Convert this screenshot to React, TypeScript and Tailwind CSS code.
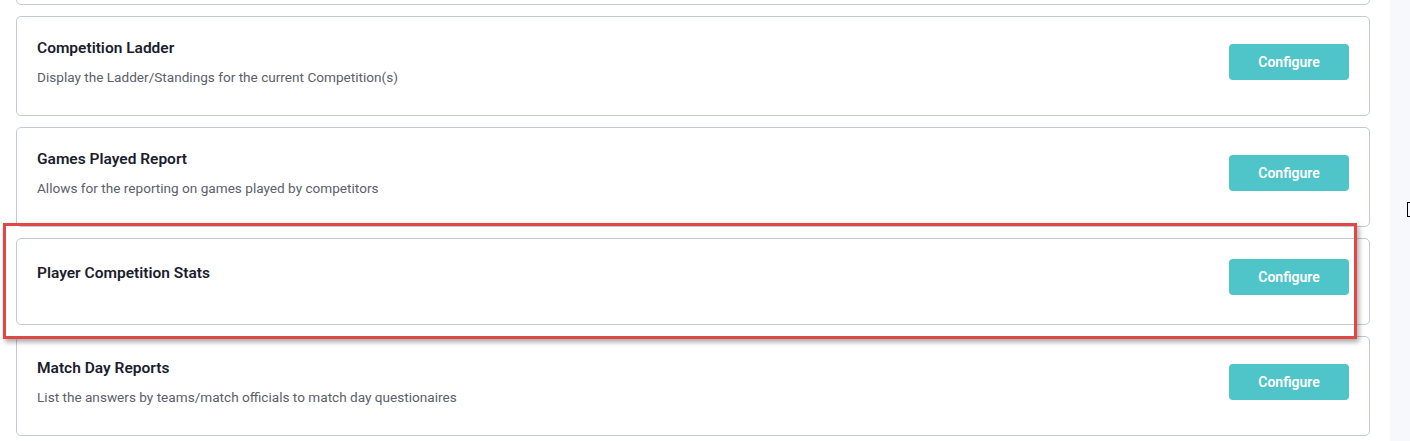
import React from "react";

type Item = { title: string; desc?: string; highlight?: boolean };

const items: Item[] = [
  { title: "Competition Results", desc: "Display results for the current Competition(s)" },
  { title: "Competition Ladder", desc: "Display the Ladder/Standings for the current Competition(s)" },
  { title: "Games Played Report", desc: "Allows for the reporting on games played by competitors" },
  { title: "Player Competition Stats", highlight: true },
  { title: "Match Day Reports", desc: "List the answers by teams/match officials to match day questionaires" },
];

function Card({ item }: { item: Item }) {
  return (
    <div className="relative">
      <div
        className={
          item.highlight
            ? "flex items-center justify-between rounded-[5px] border border-[#c3cad3] bg-white pl-5 pr-5 pt-5 pb-[29px]"
            : "flex items-center justify-between rounded-[5px] border border-[#c3cad3] bg-white pl-5 pr-5 pt-5 pb-[28px]"
        }
      >
        <div className="flex flex-col">
          <div className="text-[15.5px] leading-[22px] font-semibold text-[#1b1d2e]">{item.title}</div>
          <div className="mt-2 text-[13.6px] leading-[20px] text-[#5b606b]">{item.desc ?? ""}</div>
        </div>
        <button className="h-9 w-[120px] rounded-[4px] bg-[#4fc4c9] text-[14px] font-semibold text-white">
          Configure
        </button>
      </div>
      {item.highlight && (
        <div className="pointer-events-none absolute z-10 left-[-13px] right-[13px] top-[-15px] bottom-[-14px] border-[3px] border-[#e04848] shadow-[2px_3px_5px_rgba(0,0,0,0.35)]" />
      )}
    </div>
  );
}

export default function App() {
  return (
    <div
      className="flex h-[441px] w-[1410px] overflow-hidden bg-white"
      style={{ fontFamily: "Roboto, 'Noto Sans', sans-serif" }}
    >
      <div className="w-[1390px] shrink-0 pl-4 pr-5">
        <div className="mt-[-95px] flex flex-col gap-[11px]">
          {items.map((it) => (
            <Card key={it.title} item={it} />
          ))}
        </div>
      </div>
      <div className="relative flex-1 bg-[#f6f8fc]">
        <div className="absolute left-[17px] top-[202px] h-[15px] w-[3px] border-y border-l border-black" />
      </div>
    </div>
  );
}
